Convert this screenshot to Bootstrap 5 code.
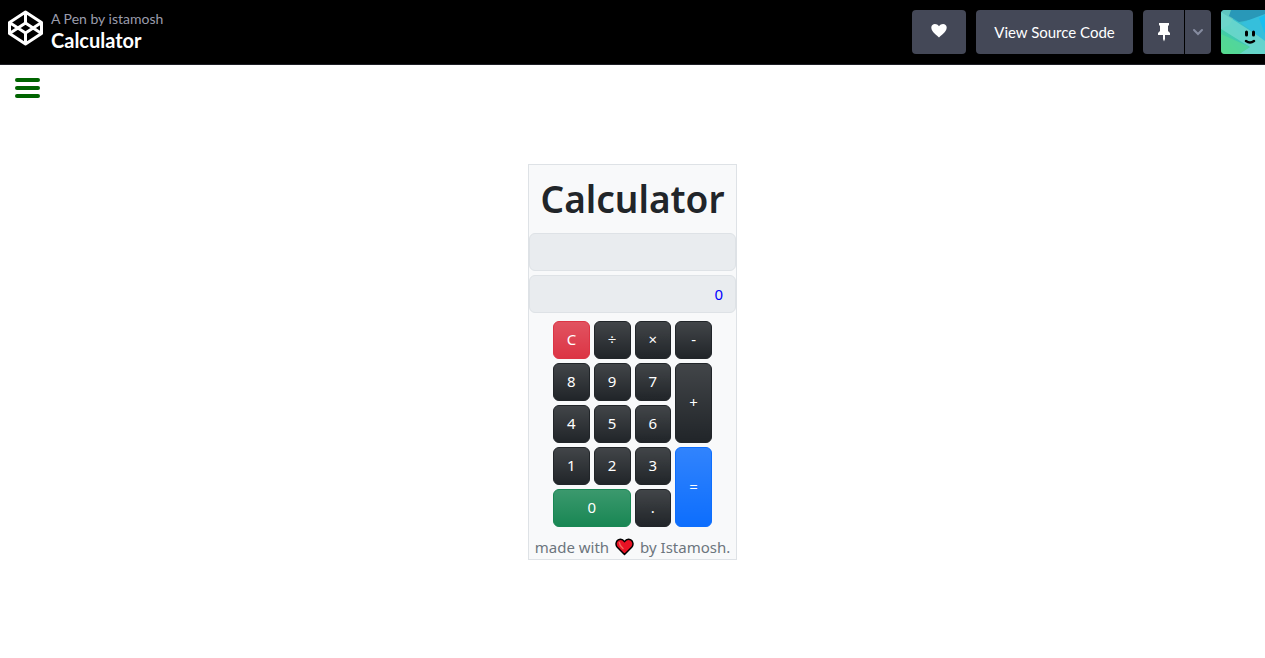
<!DOCTYPE html>
<html lang="en">
<head>
<meta charset="utf-8">
<meta name="viewport" content="width=device-width, initial-scale=1">
<title>Calculator</title>
<link href="https://cdn.jsdelivr.net/npm/bootstrap@5.3.0/dist/css/bootstrap.min.css" rel="stylesheet">
<style>
  body { font-family: "Noto Sans", sans-serif; background: #fff; }
  .pen-header { font-family: Lato, sans-serif; background: #000; height: 65px; border-bottom: 1px solid #1e1f26; padding-left: 8px; }
  .pen-info { gap: 7px; }
  .pen-author { font-size: 14px; line-height: 20px; color: #9b9dad; }
  .pen-author a { color: inherit; }
  .pen-title { font-size: 20px; line-height: 22px; font-weight: 700; color: #fff; }
  .pen-actions { gap: 10px; }
  .pen-btn { --bs-btn-color: #fff; --bs-btn-bg: #444857; --bs-btn-border-width: 0; --bs-btn-hover-color: #fff; --bs-btn-hover-bg: #5a5f73; --bs-btn-border-radius: 4px; height: 44px; font-size: 15px; display: flex; align-items: center; justify-content: center; }
  .pen-like { width: 54px; }
  .pen-source { width: 157px; }
  .pen-pin { width: 41px; }
  .pen-more { width: 26px; }
  .pen-split { gap: 1px; }
  .menu-toggle { margin: 13px 15px; width: 25px; height: 20px; }
  .menu-toggle span { height: 4px; border-radius: 2px; background: #006400; }
  .page { position: relative; }
  .menu-toggle { position: absolute; top: 0; left: 0; }
  .calc { width: 209px; }
  .calc-title { font-size: 37px; line-height: 48px; font-weight: 600; padding: 10px 0; }
  .screen, .screen:disabled { background: #e9ecef; height: 38px; color: #00f; font-size: 15px; opacity: 1; }
  .keys { display: grid; grid-template-columns: repeat(4, 1fr); grid-auto-rows: 38px; gap: 4px; width: 159px; }
  .keys .btn { font-size: 15px; padding: 0; background-image: linear-gradient(180deg, rgba(255,255,255,.15), rgba(255,255,255,0)); }
  .key-tall { grid-row: span 2; }
  .key-wide { grid-column: span 2; }
  .credit { font-size: 15px; line-height: 24px; color: #6c757d; gap: 6px; }
</style>
</head>
<body class="min-vh-100 d-flex flex-column overflow-x-hidden">
<header class="pen-header d-flex align-items-center justify-content-between">
  <div class="pen-info d-flex align-items-center">
    <a href="#" aria-label="Home" class="d-flex mb-2">
      <svg width="36" height="36" viewBox="0 0 36 36" fill="none" stroke="#fff" stroke-width="3" stroke-linejoin="round"><path d="M17.500 2 33.500 12.500V23.500L17.500 34 1.500 23.500V12.500ZM17.500 2V13M17.500 23V34M1.500 12.500 17.500 23 33.500 12.500M1.500 23.500 17.500 13 33.500 23.500"/></svg>
    </a>
    <div class="pb-1">
      <div class="pen-author">A Pen by <a href="#" class="text-decoration-none">istamosh</a></div>
      <h1 class="pen-title m-0">Calculator</h1>
    </div>
  </div>
  <div class="pen-actions d-flex">
    <button type="button" class="btn pen-btn pen-like p-0" aria-label="Like"><svg width="16" height="18" viewBox="0 0 16 18" fill="#fff"><path d="M8 14.500C6.500 13 .3 9 .3 4.600C.3.400 5.800-.100 8 3.200C10.200-.100 15.700.400 15.700 4.600C15.700 9 9.500 13 8 14.500Z"/></svg></button>
    <a href="#" class="btn pen-btn pen-source p-0">View Source Code</a>
    <div class="pen-split d-flex">
      <button type="button" class="btn pen-btn pen-pin p-0 rounded-end-0" aria-label="Pin"><svg width="14" height="20" viewBox="0 0 14 20" fill="#fff"><path d="M2 1H12V3L11 4V9L13 11V13H8V17L7 19.500L6 17V13H1V11L3 9V4L2 3Z"/></svg></button>
      <button type="button" class="btn pen-btn pen-more p-0 rounded-start-0" aria-label="More pin options"><svg width="12" height="8" viewBox="0 0 12 8" fill="none" stroke="#868ca0" stroke-width="2" stroke-linecap="round"><path d="M2 2 6 6 10 2"/></svg></button>
    </div>
    <a href="#" class="d-flex" aria-label="Profile">
      <svg width="44" height="44" viewBox="0 0 44 44">
        <defs>
          <clipPath id="avatarShape"><path d="M4 0H44V44H4Q0 44 0 40V4Q0 0 4 0Z"/></clipPath>
          <linearGradient id="avatarSky" x1="1" y1="0" x2="0" y2="1"><stop offset="0" stop-color="#27a5ce"/><stop offset=".5" stop-color="#39c3cb"/><stop offset="1" stop-color="#50d979"/></linearGradient>
        </defs>
        <g clip-path="url(#avatarShape)">
          <path d="M0 0H44V44H0Z" fill="url(#avatarSky)"/>
          <path d="M0 0H18L8 15L0 19Z" fill="#5fc5bf"/>
          <path d="M10 0H44V7L18 12L8 6Z" fill="#2998b8"/>
          <path d="M0 2 44 30V44H18L29 37L0 19Z" fill="#70d8cd" fill-opacity=".8"/>
          <path d="M20 13 44 4V31Z" fill="#35bfdc"/>
          <path d="M38 8 44 5V24Z" fill="#19bff0"/>
          <path d="M0 24 29 37 18 44H0Z" fill="#58da95" fill-opacity=".7"/>
          <path d="M25.500 22V25M32.500 22V25" stroke="#000" stroke-width="3" stroke-linecap="round"/>
          <path d="M25 31Q29 34 33 31" fill="none" stroke="#000" stroke-width="2.500" stroke-linecap="round"/>
        </g>
      </svg>
    </a>
  </div>
</header>
<main class="page flex-grow-1 d-flex align-items-center justify-content-center py-5">
  <button type="button" class="menu-toggle btn border-0 rounded-0 p-0 d-flex flex-column justify-content-between align-items-stretch" aria-label="Open menu"><span></span><span></span><span></span></button>
  <section class="calc border bg-light text-center">
    <h2 class="calc-title m-0">Calculator</h2>
    <input type="text" class="form-control screen text-end mb-1" disabled aria-label="Expression">
    <input type="text" class="form-control screen text-end mb-2" value="0" disabled aria-label="Result">
    <div class="keys mx-auto mb-2">
      <button type="button" class="btn btn-danger">C</button>
      <button type="button" class="btn btn-dark">÷</button>
      <button type="button" class="btn btn-dark">×</button>
      <button type="button" class="btn btn-dark">-</button>
      <button type="button" class="btn btn-dark">8</button>
      <button type="button" class="btn btn-dark">9</button>
      <button type="button" class="btn btn-dark">7</button>
      <button type="button" class="btn btn-dark key-tall">+</button>
      <button type="button" class="btn btn-dark">4</button>
      <button type="button" class="btn btn-dark">5</button>
      <button type="button" class="btn btn-dark">6</button>
      <button type="button" class="btn btn-dark">1</button>
      <button type="button" class="btn btn-dark">2</button>
      <button type="button" class="btn btn-dark">3</button>
      <button type="button" class="btn btn-primary key-tall">=</button>
      <button type="button" class="btn btn-success key-wide">0</button>
      <button type="button" class="btn btn-dark">.</button>
    </div>
    <div class="credit d-flex align-items-center justify-content-center">
      <span>made with</span>
      <svg width="19" height="18" viewBox="0 0 19 18" role="img" aria-label="love"><path d="M9.500 16.500 2.300 9.300C.2 7 .8 3.300 3.200 1.900C5.400.7 8 1.500 9.500 3.700C11 1.500 13.600.7 15.800 1.900C18.200 3.300 18.800 7 16.700 9.300Z" fill="#e81224" stroke="#000" stroke-width="1.500" stroke-linejoin="round"/><path d="M4.300 4.500Q4.500 7.500 8 10.500" fill="none" stroke="#f4665c" stroke-width="1.500" stroke-linecap="round"/></svg>
      <span>by Istamosh.</span>
    </div>
  </section>
</main>
<script src="https://cdn.jsdelivr.net/npm/bootstrap@5.3.0/dist/js/bootstrap.bundle.min.js"></script>
</body>
</html>
